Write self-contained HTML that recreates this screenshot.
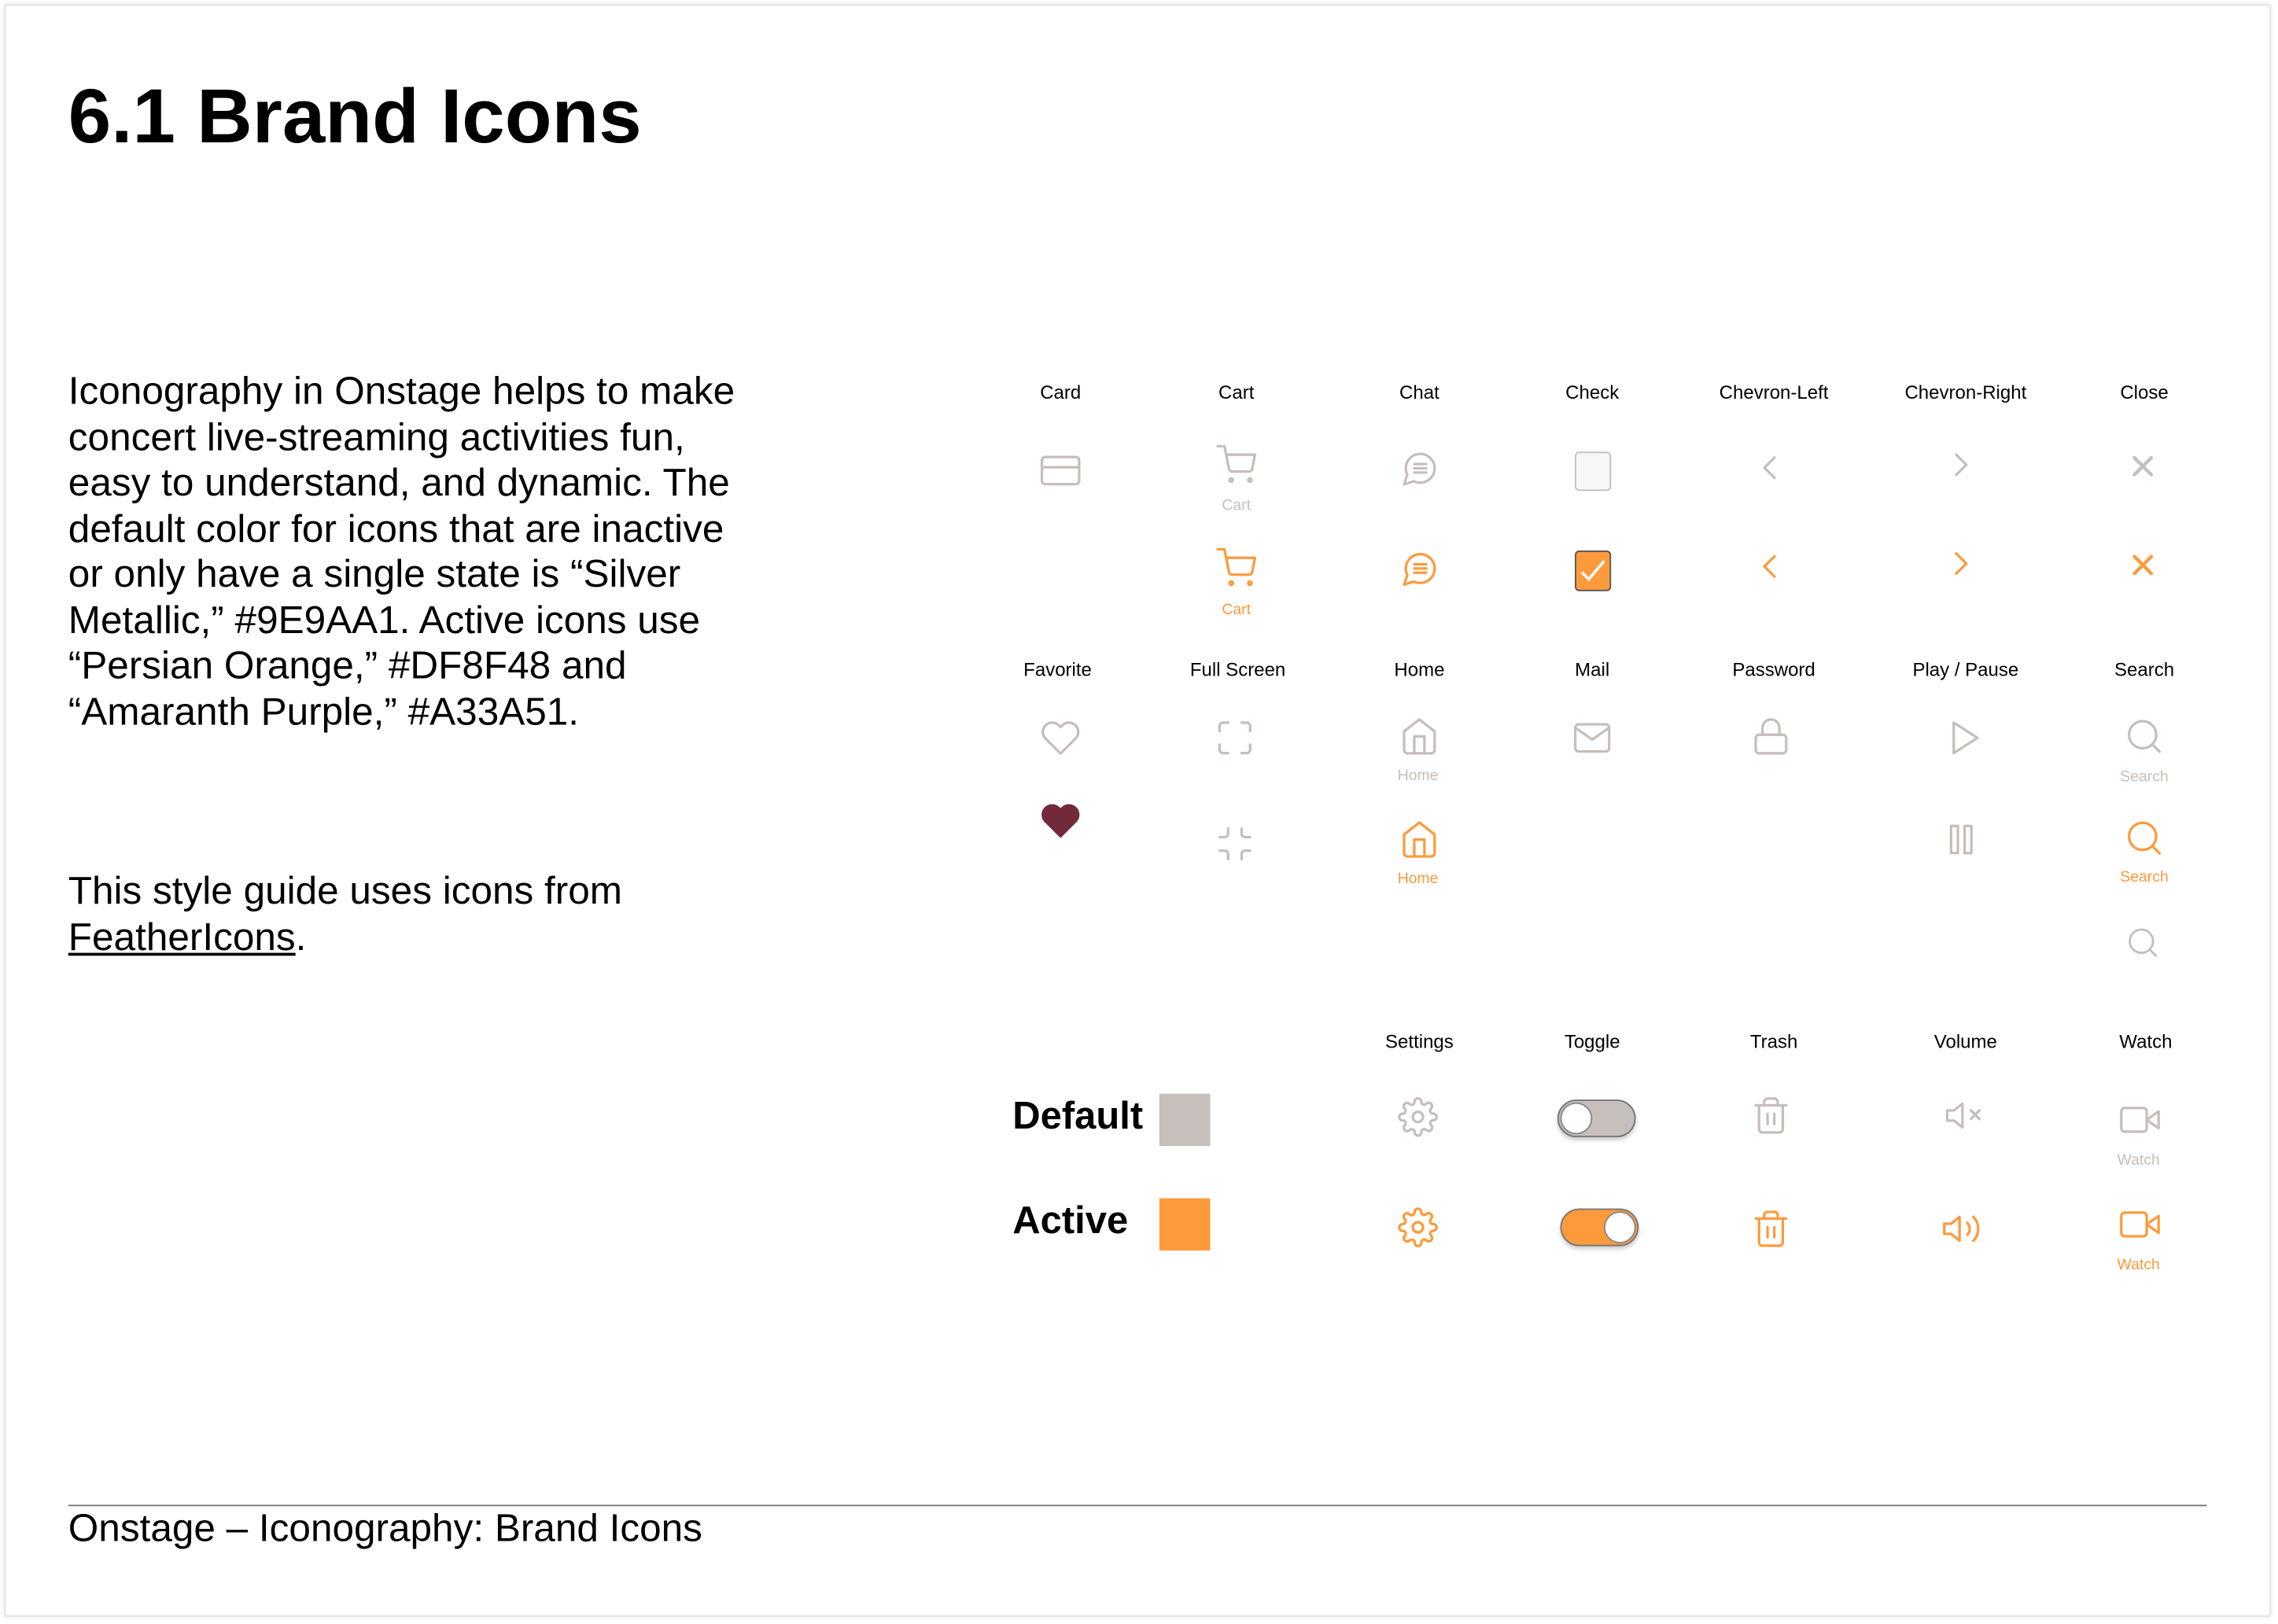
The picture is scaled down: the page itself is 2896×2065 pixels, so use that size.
<!DOCTYPE html>
<html><head><meta charset="utf-8">
<style>
html,body{margin:0;padding:0;background:#fff;}
body{width:2896px;height:2064px;overflow:hidden;position:relative;}
#s{position:absolute;left:0;top:0;width:1568px;height:1118px;transform:scale(1.8469);transform-origin:0 0;font-family:"Liberation Sans",sans-serif;color:#000;}
.frame{position:absolute;left:3px;top:3px;width:1558px;height:1108px;border:1px solid #e2e2e2;box-shadow:0 0 3px rgba(0,0,0,.12);background:#fff;}
h1{position:absolute;left:47px;top:50px;margin:0;font-size:53px;font-weight:bold;}
.p{position:absolute;left:47px;font-size:26.8px;line-height:31.5px;white-space:nowrap;}
.lab{position:absolute;transform:translate(-50%,-50%);font-size:13px;white-space:nowrap;}
.sub{position:absolute;transform:translate(-50%,-50%);font-size:10.5px;white-space:nowrap;}
.g{color:#c6beba}.o{color:#fd9a3c}
.i{position:absolute;transform:translate(-50%,-50%);width:28px;height:28px;}
.i svg{width:28px;height:28px;fill:none;stroke:currentColor;stroke-width:1.5;stroke-linecap:round;stroke-linejoin:round;display:block;}
.tg{position:absolute;transform:translate(-50%,-50%);width:54px;height:26px;border-radius:13px;border:1px solid #777;box-sizing:border-box;box-shadow:0 2px 3px rgba(0,0,0,.2);}
.kn{position:absolute;top:1px;width:22px;height:22px;border-radius:50%;background:#fff;border:1px solid #888;box-sizing:border-box;}
</style></head><body><div id="s">
<div class="frame"></div>
<h1>6.1 Brand Icons</h1>
<div class="p" style="top:254px">Iconography in Onstage helps to make<br>concert live-streaming activities fun,<br>easy to understand, and dynamic. The<br>default color for icons that are inactive<br>or only have a single state is “Silver<br>Metallic,” #9E9AA1. Active icons use<br>“Persian Orange,” #DF8F48 and<br>“Amaranth Purple,” #A33A51.</div>
<div class="p" style="top:598px">This style guide uses icons from<br><span style="text-decoration:underline">FeatherIcons</span>.</div>
<div style="position:absolute;left:47px;top:1036px;width:1472px;height:1px;background:#777"></div>
<div class="p" style="top:1037px">Onstage – Iconography: Brand Icons</div>

<div class="lab" style="left:730px;top:270px">Card</div>
<div class="lab" style="left:851px;top:270px">Cart</div>
<div class="lab" style="left:977px;top:270px">Chat</div>
<div class="lab" style="left:1096px;top:270px">Check</div>
<div class="lab" style="left:1221px;top:270px">Chevron-Left</div>
<div class="lab" style="left:1353px;top:270px">Chevron-Right</div>
<div class="lab" style="left:1476px;top:270px">Close</div>

<div class="i g" style="left:730px;top:324px"><svg viewBox="0 0 24 24"><rect x="1" y="4" width="22" height="16" rx="2"/><line x1="1" y1="10" x2="23" y2="10"/></svg></div>
<div class="i g" style="left:851px;top:320px"><svg viewBox="0 0 24 24"><circle cx="9" cy="21" r="1"/><circle cx="20" cy="21" r="1"/><path d="M1 1h4l2.68 13.39a2 2 0 0 0 2 1.61h9.72a2 2 0 0 0 2-1.61L23 6H6"/></svg></div>
<div class="sub g" style="left:851px;top:348px">Cart</div>
<div class="i o" style="left:851px;top:391px"><svg viewBox="0 0 24 24"><circle cx="9" cy="21" r="1"/><circle cx="20" cy="21" r="1"/><path d="M1 1h4l2.68 13.39a2 2 0 0 0 2 1.61h9.72a2 2 0 0 0 2-1.61L23 6H6"/></svg></div>
<div class="sub o" style="left:851px;top:420px">Cart</div>

<div class="i g" style="left:977px;top:323px"><svg viewBox="0 0 24 24"><path d="M21 11.5a8.38 8.38 0 0 1-.9 3.8 8.5 8.5 0 0 1-7.6 4.7 8.38 8.38 0 0 1-3.8-.9L3 21l1.9-5.7a8.38 8.38 0 0 1-.9-3.8 8.5 8.5 0 0 1 4.7-7.6 8.38 8.38 0 0 1 3.8-.9h.5a8.48 8.48 0 0 1 8 8v.5z"/><line x1="9" y1="9" x2="16" y2="9"/><line x1="9" y1="11.5" x2="16" y2="11.5"/><line x1="9" y1="14" x2="16" y2="14"/></svg></div>
<div class="i o" style="left:977px;top:392px"><svg viewBox="0 0 24 24"><path d="M21 11.5a8.38 8.38 0 0 1-.9 3.8 8.5 8.5 0 0 1-7.6 4.7 8.38 8.38 0 0 1-3.8-.9L3 21l1.9-5.7a8.38 8.38 0 0 1-.9-3.8 8.5 8.5 0 0 1 4.7-7.6 8.38 8.38 0 0 1 3.8-.9h.5a8.48 8.48 0 0 1 8 8v.5z"/><line x1="9" y1="9" x2="16" y2="9"/><line x1="9" y1="11.5" x2="16" y2="11.5"/><line x1="9" y1="14" x2="16" y2="14"/></svg></div>

<div style="position:absolute;left:1084px;top:311px;width:25px;height:27px;border:1px solid #c6beba;border-radius:3px;background:#f8f7f7;box-sizing:border-box"></div>
<div style="position:absolute;left:1084px;top:379px;width:25px;height:28px;border:1px solid #555;border-radius:3px;background:#fd9a3c;box-sizing:border-box"><svg viewBox="0 0 24 24" style="width:23px;height:26px;fill:none;stroke:#fff;stroke-width:2"><polyline points="4 13 9 18 20 5"/></svg></div>

<div class="i g" style="left:1218px;top:322px"><svg viewBox="0 0 24 24"><polyline points="15 18 9 12 15 6"/></svg></div>
<div class="i o" style="left:1218px;top:390px"><svg viewBox="0 0 24 24"><polyline points="15 18 9 12 15 6"/></svg></div>
<div class="i g" style="left:1350px;top:320px"><svg viewBox="0 0 24 24"><polyline points="9 18 15 12 9 6"/></svg></div>
<div class="i o" style="left:1350px;top:388px"><svg viewBox="0 0 24 24"><polyline points="9 18 15 12 9 6"/></svg></div>
<div class="i g" style="left:1475px;top:321px"><svg viewBox="0 0 24 24" style="stroke-width:2"><line x1="17" y1="7" x2="7" y2="17"/><line x1="7" y1="7" x2="17" y2="17"/></svg></div>
<div class="i o" style="left:1475px;top:389px"><svg viewBox="0 0 24 24" style="stroke-width:2"><line x1="17" y1="7" x2="7" y2="17"/><line x1="7" y1="7" x2="17" y2="17"/></svg></div>

<div class="lab" style="left:728px;top:461px">Favorite</div>
<div class="lab" style="left:852px;top:461px">Full Screen</div>
<div class="lab" style="left:977px;top:461px">Home</div>
<div class="lab" style="left:1096px;top:461px">Mail</div>
<div class="lab" style="left:1221px;top:461px">Password</div>
<div class="lab" style="left:1353px;top:461px">Play / Pause</div>
<div class="lab" style="left:1476px;top:461px">Search</div>

<div class="i g" style="left:730px;top:508px"><svg viewBox="0 0 24 24"><path d="M20.84 4.61a5.5 5.5 0 0 0-7.78 0L12 5.67l-1.06-1.06a5.5 5.5 0 0 0-7.78 7.780l1.06 1.06L12 21.23l7.78-7.78 1.06-1.06a5.5 5.5 0 0 0 0-7.78z"/></svg></div>
<div class="i" style="left:730px;top:565px;color:#722a3a"><svg viewBox="0 0 24 24" style="fill:#722a3a"><path d="M20.84 4.61a5.5 5.5 0 0 0-7.78 0L12 5.67l-1.06-1.06a5.5 5.5 0 0 0-7.78 7.78l1.06 1.06L12 21.23l7.78-7.78 1.06-1.06a5.5 5.5 0 0 0 0-7.78z"/></svg></div>

<div class="i g" style="left:850px;top:508px"><svg viewBox="0 0 24 24"><path d="M8 3H5a2 2 0 0 0-2 2v3m18 0V5a2 2 0 0 0-2-2h-3m0 18h3a2 2 0 0 0 2-2v-3M3 16v3a2 2 0 0 0 2 2h3"/></svg></div>
<div class="i g" style="left:850px;top:581px"><svg viewBox="0 0 24 24"><path d="M8 3v3a2 2 0 0 1-2 2H3m18 0h-3a2 2 0 0 1-2-2V3m0 18v-3a2 2 0 0 1 2-2h3M3 16h3a2 2 0 0 1 2 2v3"/></svg></div>

<div class="i g" style="left:977px;top:507px"><svg viewBox="0 0 24 24"><path d="M3 9l9-7 9 7v11a2 2 0 0 1-2 2H5a2 2 0 0 1-2-2z"/><polyline points="9 22 9 12 15 12 15 22"/></svg></div>
<div class="sub g" style="left:976px;top:534px">Home</div>
<div class="i o" style="left:977px;top:578px"><svg viewBox="0 0 24 24"><path d="M3 9l9-7 9 7v11a2 2 0 0 1-2 2H5a2 2 0 0 1-2-2z"/><polyline points="9 22 9 12 15 12 15 22"/></svg></div>
<div class="sub o" style="left:976px;top:605px">Home</div>

<div class="i g" style="left:1096px;top:508px"><svg viewBox="0 0 24 24"><path d="M4 4h16c1.1 0 2 .9 2 2v12c0 1.1-.9 2-2 2H4c-1.1 0-2-.9-2-2V6c0-1.1.9-2 2-2z"/><polyline points="22,6 12,13 2,6"/></svg></div>
<div class="i g" style="left:1219px;top:507px"><svg viewBox="0 0 24 24"><rect x="3" y="11" width="18" height="11" rx="2"/><path d="M7 11V7a5 5 0 0 1 10 0v4"/></svg></div>
<div class="i g" style="left:1353px;top:508px"><svg viewBox="0 0 24 24"><polygon points="5 3 19 12 5 21 5 3"/></svg></div>
<div class="i g" style="left:1350px;top:578px"><svg viewBox="0 0 24 24"><rect x="6" y="4" width="4" height="16"/><rect x="14" y="4" width="4" height="16"/></svg></div>

<div class="i g" style="left:1476px;top:507px"><svg viewBox="0 0 24 24"><circle cx="11" cy="11" r="8"/><line x1="21" y1="21" x2="16.65" y2="16.65"/></svg></div>
<div class="sub g" style="left:1476px;top:535px">Search</div>
<div class="i o" style="left:1476px;top:577px"><svg viewBox="0 0 24 24"><circle cx="11" cy="11" r="8"/><line x1="21" y1="21" x2="16.65" y2="16.65"/></svg></div>
<div class="sub o" style="left:1476px;top:604px">Search</div>
<div class="i g" style="left:1475px;top:649px;width:24px;height:24px"><svg viewBox="0 0 24 24" style="width:24px;height:24px"><circle cx="11" cy="11" r="8"/><line x1="21" y1="21" x2="16.65" y2="16.65"/></svg></div>

<div class="lab" style="left:977px;top:717px">Settings</div>
<div class="lab" style="left:1096px;top:717px">Toggle</div>
<div class="lab" style="left:1221px;top:717px">Trash</div>
<div class="lab" style="left:1353px;top:717px">Volume</div>
<div class="lab" style="left:1477px;top:717px">Watch</div>

<div style="position:absolute;left:697px;top:753px;font-size:26.5px;font-weight:bold">Default</div>
<div style="position:absolute;left:798px;top:753px;width:35px;height:36px;background:#c6bfbb"></div>
<div style="position:absolute;left:697px;top:825px;font-size:26.5px;font-weight:bold">Active</div>
<div style="position:absolute;left:798px;top:825px;width:35px;height:36px;background:#fd9a3c"></div>

<div class="i g" style="left:976px;top:769px"><svg viewBox="0 0 24 24"><circle cx="12" cy="12" r="3"/><path d="M19.4 15a1.65 1.65 0 0 0 .33 1.82l.06.06a2 2 0 0 1 0 2.83 2 2 0 0 1-2.83 0l-.06-.06a1.65 1.65 0 0 0-1.82-.33 1.65 1.65 0 0 0-1 1.51V21a2 2 0 0 1-2 2 2 2 0 0 1-2-2v-.09A1.65 1.65 0 0 0 9 19.4a1.65 1.65 0 0 0-1.82.33l-.06.06a2 2 0 0 1-2.83 0 2 2 0 0 1 0-2.83l.06-.06a1.65 1.65 0 0 0 .33-1.82 1.65 1.65 0 0 0-1.51-1H3a2 2 0 0 1-2-2 2 2 0 0 1 2-2h.09A1.65 1.65 0 0 0 4.6 9a1.65 1.65 0 0 0-.33-1.82l-.06-.06a2 2 0 0 1 0-2.83 2 2 0 0 1 2.83 0l.06.06a1.65 1.65 0 0 0 1.82.33H9a1.65 1.65 0 0 0 1-1.51V3a2 2 0 0 1 2-2 2 2 0 0 1 2 2v.09a1.65 1.65 0 0 0 1 1.51 1.65 1.65 0 0 0 1.82-.33l.06-.06a2 2 0 0 1 2.83 0 2 2 0 0 1 0 2.83l-.06.06a1.65 1.65 0 0 0-.33 1.82V9a1.65 1.65 0 0 0 1.51 1H21a2 2 0 0 1 2 2 2 2 0 0 1-2 2h-.09a1.65 1.65 0 0 0-1.51 1z"/></svg></div>
<div class="i o" style="left:976px;top:845px"><svg viewBox="0 0 24 24"><circle cx="12" cy="12" r="3"/><path d="M19.4 15a1.65 1.65 0 0 0 .33 1.82l.06.06a2 2 0 0 1 0 2.83 2 2 0 0 1-2.83 0l-.06-.06a1.65 1.65 0 0 0-1.82-.33 1.65 1.65 0 0 0-1 1.51V21a2 2 0 0 1-2 2 2 2 0 0 1-2-2v-.09A1.65 1.65 0 0 0 9 19.4a1.65 1.65 0 0 0-1.82.33l-.06.06a2 2 0 0 1-2.83 0 2 2 0 0 1 0-2.83l.06-.06a1.65 1.65 0 0 0 .33-1.82 1.65 1.65 0 0 0-1.51-1H3a2 2 0 0 1-2-2 2 2 0 0 1 2-2h.09A1.65 1.65 0 0 0 4.6 9a1.65 1.65 0 0 0-.33-1.82l-.06-.06a2 2 0 0 1 0-2.83 2 2 0 0 1 2.83 0l.06.06a1.65 1.65 0 0 0 1.82.33H9a1.65 1.65 0 0 0 1-1.51V3a2 2 0 0 1 2-2 2 2 0 0 1 2 2v.09a1.65 1.65 0 0 0 1 1.51 1.65 1.65 0 0 0 1.82-.33l.06-.06a2 2 0 0 1 2.83 0 2 2 0 0 1 0 2.83l-.06.06a1.65 1.65 0 0 0-.33 1.82V9a1.65 1.65 0 0 0 1.51 1H21a2 2 0 0 1 2 2 2 2 0 0 1-2 2h-.09a1.65 1.65 0 0 0-1.51 1z"/></svg></div>

<div class="tg" style="left:1099px;top:770px;background:#c6bfbb"><div class="kn" style="left:1px"></div></div>
<div class="tg" style="left:1101px;top:845px;background:#fd9a3c"><div class="kn" style="right:1px"></div></div>

<div class="i g" style="left:1219px;top:768px"><svg viewBox="0 0 24 24"><polyline points="3 6 5 6 21 6"/><path d="M19 6v14a2 2 0 0 1-2 2H7a2 2 0 0 1-2-2V6m3 0V4a2 2 0 0 1 2-2h4a2 2 0 0 1 2 2v2"/><line x1="10" y1="11" x2="10" y2="17"/><line x1="14" y1="11" x2="14" y2="17"/></svg></div>
<div class="i o" style="left:1219px;top:846px"><svg viewBox="0 0 24 24"><polyline points="3 6 5 6 21 6"/><path d="M19 6v14a2 2 0 0 1-2 2H7a2 2 0 0 1-2-2V6m3 0V4a2 2 0 0 1 2-2h4a2 2 0 0 1 2 2v2"/><line x1="10" y1="11" x2="10" y2="17"/><line x1="14" y1="11" x2="14" y2="17"/></svg></div>

<div class="i g" style="left:1352px;top:768px"><svg viewBox="0 0 24 24"><polygon points="11 5 6 9 2 9 2 15 6 15 11 19 11 5"/><line x1="21" y1="9" x2="16" y2="14"/><line x1="16" y1="9" x2="21" y2="14"/></svg></div>
<div class="i o" style="left:1350px;top:846px"><svg viewBox="0 0 24 24"><polygon points="11 5 6 9 2 9 2 15 6 15 11 19 11 5"/><path d="M19.07 4.93a10 10 0 0 1 0 14.14M15.54 8.46a5 5 0 0 1 0 7.07"/></svg></div>

<div class="i g" style="left:1473px;top:771px"><svg viewBox="0 0 24 24"><polygon points="23 7 16 12 23 17 23 7"/><rect x="1" y="5" width="15" height="14" rx="2"/></svg></div>
<div class="sub g" style="left:1472px;top:799px">Watch</div>
<div class="i o" style="left:1473px;top:843px"><svg viewBox="0 0 24 24"><polygon points="23 7 16 12 23 17 23 7"/><rect x="1" y="5" width="15" height="14" rx="2"/></svg></div>
<div class="sub o" style="left:1472px;top:871px">Watch</div>
</div></body></html>
